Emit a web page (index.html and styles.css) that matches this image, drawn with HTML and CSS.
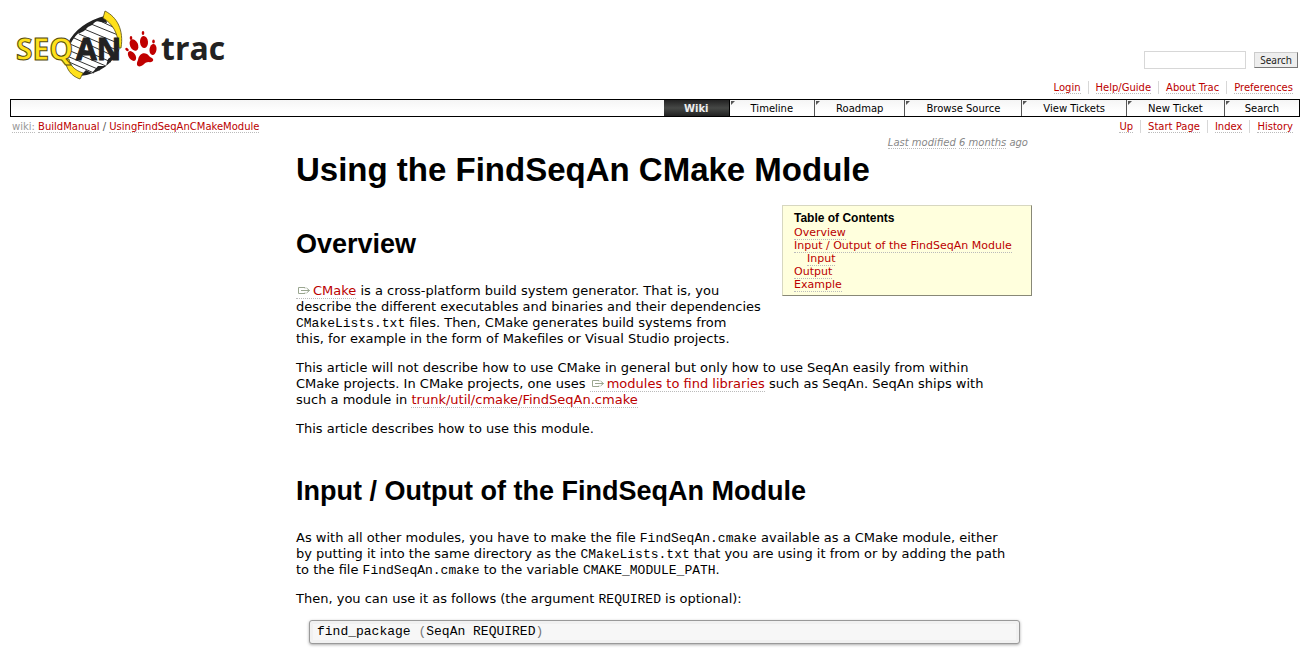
FILE: index.html
```
<!DOCTYPE html>
<html lang="en">
<head>
<meta charset="utf-8">
<title>Using the FindSeqAn CMake Module</title>
<link rel="stylesheet" href="styles.css">
</head>
<body>
<svg class="defs" aria-hidden="true">
  <symbol id="ext" viewBox="0 0 15 9">
    <path d="M9 2.5V1.500H2.500V7.500H9V6.500M5 4.500H13.500M10.500 2L13.500 4.500L10.500 7" fill="none" stroke="#9aa690"/>
  </symbol>
</svg>
<header class="banner">
  <a class="logo" href="#" aria-label="SeqAn trac">
    <svg width="216" height="76" viewBox="10 7 216 76">
      <path d="M105 20C90 22 76 32 70 44C66 52 66 60 70 66L84 76C99 74 112 65 119 54C122 42 117 27 105 20Z" fill="#fff"/>
      <path d="M91 24L118 35M84 29L120 44M79 34L119 51M74 38L116 57M70 44L111 62M68 50L106 66M67 56L100 70M69 62L94 73M98 20L113 27" stroke="#333" stroke-width="1"/>
      <path d="M106 17C89 21 75 31 69 44" fill="none" stroke="#222" stroke-width="2.500"/>
      <path d="M106 17C97 18 87 23 80 30L78 34L84 31L88 27L92 25L96 21L107 23ZM120 48C113 64 99 74 80 76L86 70L92 73L98 66L106 66L108 59L112 56Z" fill="#222"/>
      <path d="M105 11C117 17 124 30 121 48L119 48C118 33 113 24 103 18Z" fill="#ffe11b" stroke="#554b10" stroke-width=".8"/>
      <path d="M69 59C70 65 74 70 83 73L80 79C71 76 66 69 65 59Z" fill="#ffe11b" stroke="#554b10" stroke-width=".8"/>
      <text class="logo-seq" x="16" y="60">SEQ</text>
      <text class="logo-an" x="76" y="60">AN</text>
      <g fill="#c00000">
        <ellipse cx="144" cy="42" rx="4" ry="6" transform="rotate(-5 144 42)"/>
        <ellipse cx="134" cy="45" rx="4" ry="6" transform="rotate(-25 134 45)"/>
        <ellipse cx="153" cy="49.500" rx="3.500" ry="5.500" transform="rotate(8 153 49.500)"/>
        <ellipse cx="132" cy="56" rx="3.300" ry="5.500" transform="rotate(-35 132 56)"/>
        <path d="M138 60C139 54 143 52 147 54C149 55 149 57 152 58C155 60 152 63 149 62C146 62 145 63 143 65C139 68 135 66 138 60Z"/>
        <ellipse cx="143" cy="33" rx="1.300" ry="2"/>
        <ellipse cx="131" cy="38" rx="1.300" ry="2"/>
        <ellipse cx="153.500" cy="41.500" rx="1.300" ry="2"/>
        <ellipse cx="127" cy="49.500" rx="1.300" ry="2" transform="rotate(-50 127 49.500)"/>
      </g>
      <text class="logo-trac" x="161" y="60">trac</text>
    </svg>
  </a>
  <div class="tools">
    <form class="search">
      <input type="text" aria-label="Search query">
      <button type="button">Search</button>
    </form>
    <nav class="links">
      <ul>
        <li><a href="#">Login</a></li>
        <li><a href="#">Help/Guide</a></li>
        <li><a href="#">About Trac</a></li>
        <li><a href="#">Preferences</a></li>
      </ul>
    </nav>
  </div>
</header>
<nav class="mainnav">
  <a class="active" href="#">Wiki</a>
  <a href="#">Timeline</a>
  <a href="#">Roadmap</a>
  <a href="#">Browse Source</a>
  <a href="#">View Tickets</a>
  <a href="#">New Ticket</a>
  <a class="last" href="#">Search</a>
</nav>
<div class="context">
  <div class="path"><a class="muted" href="#">wiki:</a> <a href="#">BuildManual</a> / <a href="#">UsingFindSeqAnCMakeModule</a></div>
  <nav class="links">
    <ul>
      <li><a href="#">Up</a></li>
      <li><a href="#">Start Page</a></li>
      <li><a href="#">Index</a></li>
      <li><a href="#">History</a></li>
    </ul>
  </nav>
</div>
<main class="content">
  <article class="page">
    <p class="modified"><a href="#">Last modified</a> <a href="#">6 months</a> ago</p>
    <h1>Using the FindSeqAn CMake Module</h1>
    <nav class="toc">
      <h4>Table of Contents</h4>
      <ol>
        <li><a href="#overview">Overview</a></li>
        <li><a href="#io">Input / Output of the FindSeqAn Module</a>
          <ol><li><a href="#io">Input</a></li></ol>
        </li>
        <li><a href="#io">Output</a></li>
        <li><a href="#io">Example</a></li>
      </ol>
    </nav>
    <h2 id="overview">Overview</h2>
    <p><a href="#"><svg class="ext"><use href="#ext"/></svg>CMake</a> is a cross-platform build system generator. That is, you<br>
    describe the different executables and binaries and their dependencies<br>
    <code>CMakeLists.txt</code> files. Then, CMake generates build systems from<br>
    this, for example in the form of Makefiles or Visual Studio projects.</p>
    <p>This article will not describe how to use CMake in general but only how to use SeqAn easily from within<br>
    CMake projects. In CMake projects, one uses <a href="#"><svg class="ext"><use href="#ext"/></svg>modules to find libraries</a> such as SeqAn. SeqAn ships with<br>
    such a module in <a href="#">trunk/util/cmake/FindSeqAn.cmake</a></p>
    <p>This article describes how to use this module.</p>
    <h2 id="io">Input / Output of the FindSeqAn Module</h2>
    <p>As with all other modules, you have to make the file <code>FindSeqAn.cmake</code> available as a CMake module, either<br>
    by putting it into the same directory as the <code>CMakeLists.txt</code> that you are using it from or by adding the path<br>
    to the file <code>FindSeqAn.cmake</code> to the variable <code>CMAKE_MODULE_PATH</code>.</p>
    <p>Then, you can use it as follows (the argument <code>REQUIRED</code> is optional):</p>
    <pre>find_package <span class="paren">(</span>SeqAn REQUIRED<span class="paren">)</span></pre>
  </article>
</main>
</body>
</html>
```
FILE: styles.css
```
body {
  margin: 0;
  padding: 7px 10px 0;
  background: #fff;
  color: #000;
  font: 13px/16px Verdana, "DejaVu Sans", sans-serif;
}
a {
  color: #b00;
  text-decoration: none;
  border-bottom: 1px dotted #bbb;
}
ul, ol { list-style: none; margin: 0; padding: 0; }
.defs { position: absolute; width: 0; height: 0; }

.banner { display: flex; justify-content: space-between; height: 92px; }
.logo { border: 0; }
.logo svg { display: block; }
.logo-seq, .logo-an { font: bold 30px "Open Sans", sans-serif; }
.logo-seq { fill: #ffe11b; stroke: #554b10; stroke-width: 1px; }
.logo-an { fill: #222; stroke: #222; stroke-width: 1px; }
.logo-trac { font: bold 32px "Open Sans", sans-serif; fill: #222; }

.tools {
  display: flex;
  flex-direction: column;
  justify-content: flex-end;
  align-items: flex-end;
  gap: 12px;
  padding-bottom: 5px;
}
.tools form { margin: 0; }
.search { display: flex; align-items: center; gap: 8px; padding-right: 2px; }
.tools .search { padding-right: 2px; }
.search input {
  box-sizing: border-box;
  width: 102px;
  height: 18px;
  border: 1px solid #d7d7d7;
  padding: 0 3px;
}
.search button {
  box-sizing: border-box;
  width: 44px;
  height: 16px;
  padding: 0;
  border: 1px solid #ccc;
  border-right-color: #777;
  border-bottom-color: #777;
  background: #eee;
  color: #222;
  font: 10px/12px "Noto Sans", sans-serif;
}
.links { font-size: 10px; line-height: 13px; }
.links ul { display: flex; }
.links li { border-right: 1px solid #d7d7d7; padding: 0 7px; }
.links li:last-child { border: 0; }

.mainnav {
  display: flex;
  justify-content: flex-end;
  height: 16px;
  border: 1px solid #000;
  background: linear-gradient(#f5f5f5, #fff 70%);
  font-size: 10px;
  line-height: 17px;
}
.mainnav a {
  position: relative;
  border: 0;
  border-right: 1px solid #555;
  padding: 0 21px;
  color: #000;
}
.mainnav a::before {
  content: "";
  position: absolute;
  left: 1px;
  top: 1px;
  border-top: 4px solid #555;
  border-right: 4px solid transparent;
}
.mainnav .active {
  padding: 0 20px;
  background: linear-gradient(#222, #464846 50%, #222);
  color: #eee;
  font-weight: bold;
  border-color: #000;
}
.mainnav .active::before { content: none; }
.mainnav .last { border-right: 0; padding: 0 20px; }

.context {
  display: flex;
  justify-content: space-between;
  padding: 3px 0 0 2px;
  font-size: 10px;
  line-height: 13px;
}
.path { color: #555; }
.path .muted { color: #999; }

.content { padding-left: 18px; }
.page { max-width: 736px; margin: 0 auto; }
.modified {
  margin: 3px 4px 0 0;
  text-align: right;
  font-size: 10px;
  line-height: 13px;
  font-style: italic;
  color: #888;
}
.modified a { color: #888; }
h1, h2, h4 { font-family: Arial, "Liberation Sans", sans-serif; font-weight: bold; }
h1 { margin: 2px 0 16px; font-size: 33px; line-height: 38px; }
h2 { margin: 39px 0 31px; font-size: 27px; line-height: 31px; }
.toc {
  float: right;
  box-sizing: border-box;
  width: 250px;
  margin: 0 0 26px 8px;
  padding: 6px 11px 4px;
  border: 1px solid #d7d7c0;
  border-right-color: #887;
  border-bottom-color: #887;
  background: #ffd;
  font-size: 11px;
  line-height: 13px;
}
.toc h4 { margin: 0 0 1px; font-size: 12px; line-height: 13px; }
.toc ol ol { padding-left: 13px; }
.toc + h2 { margin: 40px 0 23px; }
#io { margin-bottom: 23px; }
p { margin: 0 0 13px; }
code, pre { font-family: "Courier New", "Liberation Mono", monospace; font-size: 13px; }
code { line-height: 12px; }
pre {
  margin: 0 12px 13px 13px;
  padding: 3px 7px;
  border: 1px solid #999;
  border-radius: 3px;
  background: #f7f7f7;
  box-shadow: 0 1px 3px #aaa, inset 0 0 0 3px #f1f1f1;
}
.paren { color: #777; }
.ext { width: 15px; height: 9px; margin-right: 2px; }
```
